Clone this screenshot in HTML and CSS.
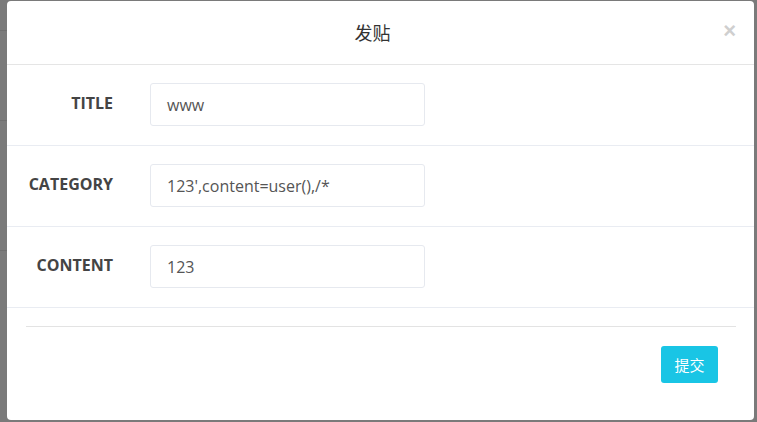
FILE: index.html
```html
<!DOCTYPE html>
<html lang="zh">
<head>
<meta charset="utf-8">
<title>发贴</title>
<link rel="stylesheet" href="styles.css">
</head>
<body>
<div class="backdrop">
  <div class="modal">
    <div class="modal-header">
      <h4 class="modal-title">发贴</h4>
      <span class="close">&times;</span>
    </div>
    <form class="modal-body">
      <div class="row">
        <label class="label">TITLE</label>
        <div class="input">www</div>
      </div>
      <div class="row">
        <label class="label">CATEGORY</label>
        <div class="input">123',content=user(),/*</div>
      </div>
      <div class="row">
        <label class="label">CONTENT</label>
        <div class="input">123</div>
      </div>
    </form>
    <div class="modal-footer">
      <div class="divider"></div>
      <div class="actions">
        <button class="btn" type="button">提交</button>
      </div>
    </div>
  </div>
</div>
</body>
</html>
```
FILE: styles.css
```css
html, body {
  margin: 0;
  padding: 0;
  height: 100%;
}
body {
  background: #7a7a7a;
  font-family: "Open Sans", "Noto Sans CJK SC", sans-serif;
  overflow: hidden;
}
.backdrop {
  padding: 1px 3px 2px 7px;
  height: 419px;
  background:
    linear-gradient(#6f6f6f, #6f6f6f) 0 30px / 7px 1px no-repeat,
    linear-gradient(#6f6f6f, #6f6f6f) 0 120px / 7px 1px no-repeat,
    linear-gradient(#6f6f6f, #6f6f6f) 0 250px / 7px 1px no-repeat,
    #7a7a7a;
}
.modal {
  width: 747px;
  height: 419px;
  background: #fff;
  border-radius: 4px;
  display: flex;
  flex-direction: column;
}
.modal-header {
  height: 63px;
  border-bottom: 1px solid #e5e5e5;
  display: flex;
  align-items: center;
  justify-content: center;
  padding-right: 16px;
  position: relative;
}
.modal-title {
  margin: 0;
  font-family: "Noto Sans CJK SC", sans-serif;
  font-weight: 400;
  font-size: 18px;
  color: #333;
  padding-bottom: 1px;
}
.close {
  position: absolute;
  right: 18px;
  top: 19px;
  font-family: "Liberation Sans", sans-serif;
  font-weight: 700;
  font-size: 22px;
  line-height: 22px;
  color: #cfcfcf;
}
.modal-body {
  margin: 0;
  display: flex;
  flex-direction: column;
}
.row {
  display: grid;
  grid-template-columns: 106px 275px;
  column-gap: 37px;
  align-items: center;
  padding: 18px 0 19px;
  border-bottom: 1px solid #e9ecf2;
}
.label {
  text-align: right;
  font-weight: 700;
  font-size: 16px;
  color: #444;
  margin-bottom: 3px;
}
.input {
  box-sizing: border-box;
  height: 43px;
  border: 1px solid #e6e9ef;
  border-radius: 3px;
  padding: 0 16px;
  display: flex;
  align-items: center;
  font-size: 16px;
  color: #555;
}
.modal-footer {
  padding: 18px 18px 0 19px;
}
.divider {
  height: 1px;
  background: #e3e3e3;
}
.actions {
  display: flex;
  justify-content: flex-end;
  padding: 19px 18px 0 0;
}
.btn {
  width: 57px;
  height: 37px;
  border: 0;
  border-radius: 3px;
  background: #19c5e5;
  color: #fff;
  font-family: "Noto Sans CJK SC", sans-serif;
  font-size: 15px;
  padding: 0;
}
```
